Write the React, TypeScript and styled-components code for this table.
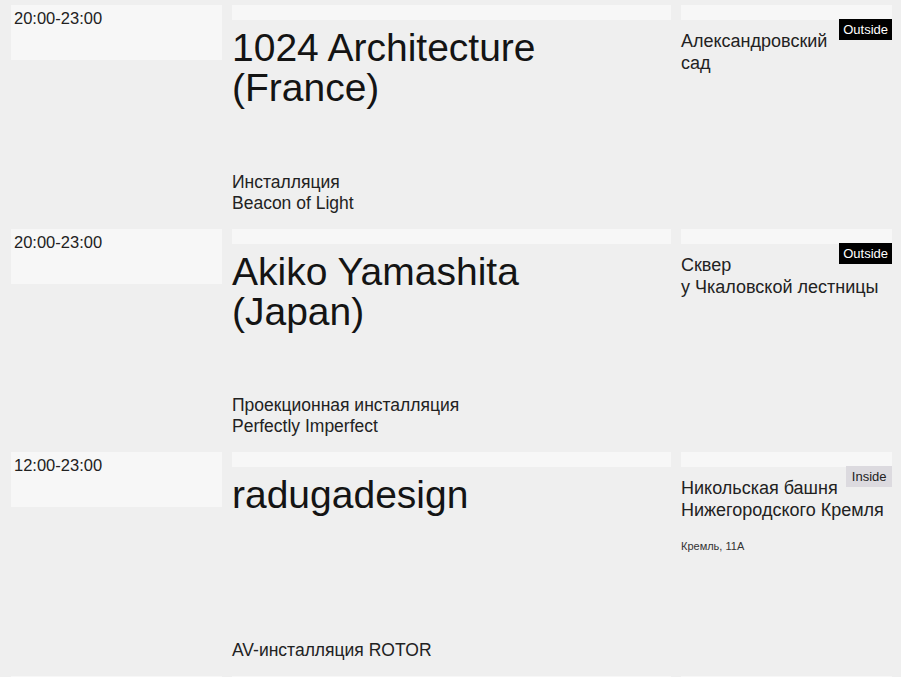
import React from "react";
import styled, { createGlobalStyle } from "styled-components";

const GlobalStyle = createGlobalStyle`
  html, body {
    margin: 0;
    padding: 0;
    background: #efefef;
  }
  body {
    font-family: "Liberation Sans", Arial, sans-serif;
    color: #1c1c1c;
  }
`;

const List = styled.div`
  padding: 5px 9px 0 11px;
`;

const Row = styled.div`
  display: grid;
  grid-template-columns: 211px 439px 211px;
  column-gap: 10px;
  height: 223.5px;
`;

const Slot = styled.div`
  background: #f7f7f7;
`;

const TimeBox = styled(Slot)`
  height: 55px;
  box-sizing: border-box;
  padding: 4px 3px;
  font-size: 16.5px;
  line-height: 19px;
  color: #222;
`;

const Bar = styled(Slot)`
  height: 15px;
`;

const Middle = styled.div`
  display: flex;
  flex-direction: column;
  padding-bottom: 15px;
  box-sizing: border-box;
`;

const Title = styled.h2`
  margin: 8px 0 0;
  font-weight: 400;
  font-size: 39px;
  line-height: 40px;
  color: #141414;
`;

const Caption = styled.p`
  margin: auto 0 0;
  font-size: 17.5px;
  line-height: 21px;
  color: #222;
`;

const Side = styled.div`
  position: relative;
`;

const Place = styled.p`
  margin: 10px 0 0;
  font-size: 18px;
  line-height: 22px;
  color: #222;
`;

const Address = styled.p`
  margin: 19px 0 0;
  font-size: 11px;
  line-height: 13px;
  color: #333;
`;

const Badge = styled.span<{ $inside?: boolean }>`
  position: absolute;
  top: 14px;
  right: 0;
  height: 21px;
  padding: 0 ${(p) => (p.$inside ? "5.5px" : "4px")};
  font-size: 13px;
  line-height: 21px;
  background: ${(p) => (p.$inside ? "#dcdadf" : "#000")};
  color: ${(p) => (p.$inside ? "#222" : "#fff")};
`;

type Event = {
  time: string;
  title: string[];
  caption: string[];
  place: string[];
  badge: "Outside" | "Inside";
  address?: string;
};

const events: Event[] = [
  {
    time: "20:00-23:00",
    title: ["1024 Architecture", "(France)"],
    caption: ["Инсталляция", "Beacon of Light"],
    place: ["Александровский", "сад"],
    badge: "Outside",
  },
  {
    time: "20:00-23:00",
    title: ["Akiko Yamashita", "(Japan)"],
    caption: ["Проекционная инсталляция", "Perfectly Imperfect"],
    place: ["Сквер", "у Чкаловской лестницы"],
    badge: "Outside",
  },
  {
    time: "12:00-23:00",
    title: ["radugadesign"],
    caption: ["AV-инсталляция ROTOR"],
    place: ["Никольская башня", "Нижегородского Кремля"],
    badge: "Inside",
    address: "Кремль, 11A",
  },
];

const lines = (items: string[]) =>
  items.map((line, i) => (
    <React.Fragment key={i}>
      {i > 0 && <br />}
      {line}
    </React.Fragment>
  ));

const EventRow = ({ event }: { event: Event }) => (
  <Row>
    <div>
      <TimeBox>{event.time}</TimeBox>
    </div>
    <Middle>
      <Bar />
      <Title>{lines(event.title)}</Title>
      <Caption>{lines(event.caption)}</Caption>
    </Middle>
    <Side>
      <Bar />
      <Badge $inside={event.badge === "Inside"}>{event.badge}</Badge>
      <Place>{lines(event.place)}</Place>
      {event.address && <Address>{event.address}</Address>}
    </Side>
  </Row>
);

const App = () => {
  return (
    <>
      <GlobalStyle />
      <List>
        {events.map((event, i) => (
          <EventRow key={i} event={event} />
        ))}
        {/* next item, only its top edge is in view */}
        <Row>
          <div>
            <TimeBox />
          </div>
          <Middle>
            <Bar />
          </Middle>
          <Side>
            <Bar />
          </Side>
        </Row>
      </List>
    </>
  );
};

export default App;
